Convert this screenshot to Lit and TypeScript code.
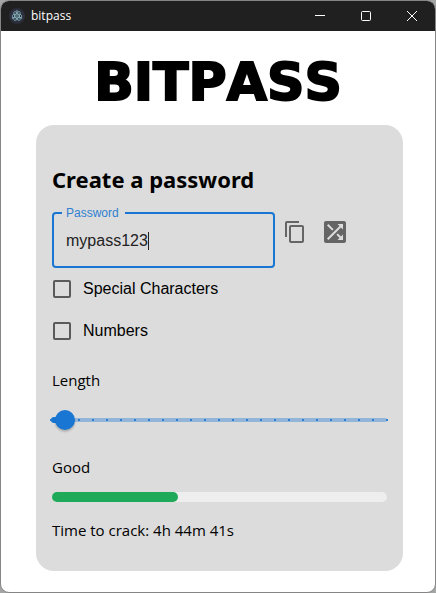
import { LitElement, html, css } from "lit";
import { customElement, state } from "lit/decorators.js";

@customElement("app-titlebar")
class AppTitlebar extends LitElement {
  static styles = css`
    :host {
      display: flex;
      align-items: center;
      height: 30px;
      padding-left: 8px;
      background: #202020;
      color: #fff;
      font: 12px/16px "Open Sans", "Noto Sans", sans-serif;
    }
    .logo {
      width: 16px;
      height: 16px;
      margin-right: 6px;
    }
    .name {
      flex: 1;
    }
    .control {
      display: grid;
      place-items: center;
      width: 46px;
      height: 30px;
      padding: 0;
      border: 0;
      background: none;
      color: inherit;
    }
    .control svg {
      width: 12px;
      height: 12px;
      fill: none;
      stroke: currentColor;
    }
  `;

  render() {
    return html`
      <svg class="logo" viewBox="0 0 32 32" aria-hidden="true">
        <circle cx="16" cy="16" r="16" fill="#2b2e3b" />
        <g fill="none" stroke="#8fbfca" stroke-width="1.5">
          <ellipse cx="16" cy="16" rx="10" ry="4" />
          <ellipse cx="16" cy="16" rx="10" ry="4" transform="rotate(60 16 16)" />
          <ellipse cx="16" cy="16" rx="10" ry="4" transform="rotate(120 16 16)" />
        </g>
        <g fill="#8fbfca">
          <circle cx="16" cy="16" r="1.6" />
          <circle cx="7" cy="20" r="1.6" />
          <circle cx="25" cy="20" r="1.6" />
          <circle cx="16" cy="6" r="1.6" />
        </g>
      </svg>
      <span class="name">bitpass</span>
      <button class="control" aria-label="Minimize">
        <svg viewBox="0 0 12 12"><path d="M1 5.5h10" /></svg>
      </button>
      <button class="control" aria-label="Maximize">
        <svg viewBox="0 0 12 12"><rect x="1.5" y="1.5" width="9" height="9" rx="1" /></svg>
      </button>
      <button class="control" aria-label="Close">
        <svg viewBox="0 0 12 12"><path d="M1 1l10 10M11 1L1 11" /></svg>
      </button>
    `;
  }
}

@customElement("length-slider")
class LengthSlider extends LitElement {
  @state() private value = 1;
  private readonly steps = 24;

  static styles = css`
    :host {
      display: grid;
      align-items: center;
      height: 20px;
      margin-left: -1px;
    }
    .rail,
    .fill,
    .range {
      grid-area: 1 / 1;
    }
    .rail {
      display: flex;
      justify-content: space-between;
      align-items: center;
      height: 4px;
      border-radius: 2px;
      background: #94b5da;
    }
    .mark {
      width: 2px;
      height: 2px;
      margin: 0 -1px;
      background: #2f80d1;
    }
    .fill {
      height: 6px;
      border-radius: 3px;
      background: #1976d2;
    }
    .range {
      appearance: none;
      height: 20px;
      margin: 0 -10px;
      background: none;
      outline: 0;
    }
    .range::-webkit-slider-thumb {
      appearance: none;
      width: 20px;
      height: 20px;
      border-radius: 50%;
      background: #1976d2;
      box-shadow: 0 2px 2px rgba(0, 0, 0, 0.2);
    }
  `;

  render() {
    return html`
      <div class="rail">
        ${Array.from({ length: this.steps + 1 }, () => html`<span class="mark"></span>`)}
      </div>
      <div class="fill" style="width: ${(this.value / this.steps) * 100}%"></div>
      <input
        class="range"
        type="range"
        min="0"
        max=${this.steps}
        .value=${String(this.value)}
        aria-label="Length"
        @input=${(e: Event) => (this.value = Number((e.target as HTMLInputElement).value))}
      />
    `;
  }
}

@customElement("app-root")
class AppRoot extends LitElement {
  @state() private strength = 37.5;

  static styles = css`
    :host {
      display: block;
      box-sizing: border-box;
      min-height: 100vh;
      background: #a4a6a5;
      font: 15px/24px "Open Sans", "Noto Sans", sans-serif;
      color: #000;
    }
    .window {
      box-sizing: border-box;
      min-height: 100vh;
      padding-bottom: 20px;
      border: 1px solid #858585;
      border-radius: 9px;
      background: #fff;
      overflow: hidden;
    }
    .brand {
      margin: 20px 0 12px;
      font: bold 52px/62px "DejaVu Sans", sans-serif;
      font-kerning: none;
      -webkit-text-stroke: 2px #000;
      text-align: center;
      white-space: nowrap;
    }
    .card {
      margin: 0 32px 0 35px;
      padding: 36px 16px 29px;
      border-radius: 18px;
      background: #dcdcdc;
    }
    h2 {
      margin: 0 0 10px;
      font: bold 22px/36px "Noto Sans", sans-serif;
    }
    .row {
      display: flex;
      height: 61px;
    }
    .field {
      box-sizing: border-box;
      width: 223px;
      height: 61px;
      min-width: 0;
      margin: 0;
      padding: 10px 12px;
      border: 2px solid #1976d2;
      border-radius: 4px;
      font: 16px/24px "Liberation Sans", sans-serif;
    }
    .field legend {
      margin-left: -4px;
      padding: 0 6px 0 4px;
      color: #2f7fd1;
      font-size: 12px;
      line-height: 12px;
    }
    .field input {
      display: block;
      field-sizing: content;
      height: 18px;
      max-width: 100%;
      margin-top: 3px;
      padding: 0;
      border: 0;
      border-right: 1px solid #222;
      outline: 0;
      background: none;
      color: #222;
      font: inherit;
      caret-color: transparent;
    }
    .icon {
      display: grid;
      place-items: center;
      width: 40px;
      height: 40px;
      margin-top: 5px;
      padding: 0;
      border: 0;
      background: none;
    }
    .icon svg {
      width: 24px;
      height: 24px;
      fill: #656565;
      fill-rule: evenodd;
    }
    .check {
      display: flex;
      align-items: center;
      gap: 12px;
      height: 42px;
      padding-left: 1px;
      font: 16px/24px "Liberation Sans", sans-serif;
    }
    .check input {
      appearance: none;
      box-sizing: border-box;
      width: 18px;
      height: 18px;
      margin: 0;
      border: 2px solid #5a5a5a;
      border-radius: 2px;
    }
    p {
      margin: 0;
    }
    .length {
      margin: 16px 0 18px;
    }
    .rating {
      margin: 25px 0 13px;
    }
    .meter {
      height: 10px;
      margin-bottom: 16px;
      border-radius: 5px;
      background: #eee;
    }
    .bar {
      height: 10px;
      border-radius: 5px;
      background: #1faa59;
    }
  `;

  render() {
    return html`
      <div class="window">
        <app-titlebar></app-titlebar>
        <h1 class="brand">BITPASS</h1>
        <main class="card">
          <h2>Create a password</h2>
          <div class="row">
            <fieldset class="field">
              <legend><label for="password">Password</label></legend>
              <input id="password" type="text" size="9" value="mypass123" />
            </fieldset>
            <button class="icon" aria-label="Copy password">
              <svg viewBox="0 0 24 24">
                <path d="M16 1H4c-1.1 0-2 .9-2 2v14h2V3h12V1zm3 4H8c-1.1 0-2 .9-2 2v14c0 1.1.9 2 2 2h11c1.1 0 2-.9 2-2V7c0-1.1-.9-2-2-2zm0 16H8V7h11v14z" />
              </svg>
            </button>
            <button class="icon" aria-label="Generate password">
              <svg viewBox="0 0 24 24">
                <path d="M21 1H3c-1.1 0-2 .9-2 2v18c0 1.1.9 2 2 2h18c1.1 0 2-.9 2-2V3c0-1.1-.9-2-2-2zM5.41 4l5.18 5.17-1.41 1.41L4 5.42 5.41 4zM20 20h-5.5l2.05-2.05-3.13-3.13 1.41-1.41 3.13 3.13L20 14.5V20zm0-10.5l-2.04-2.04L5.41 20 4 18.59 16.54 6.04 14.5 4H20v5.5z" />
              </svg>
            </button>
          </div>
          <label class="check"><input type="checkbox" />Special Characters</label>
          <label class="check"><input type="checkbox" />Numbers</label>
          <p class="length">Length</p>
          <length-slider></length-slider>
          <p class="rating">Good</p>
          <div class="meter"><div class="bar" style="width: ${this.strength}%"></div></div>
          <p>Time to crack: 4h 44m 41s</p>
        </main>
      </div>
    `;
  }
}
